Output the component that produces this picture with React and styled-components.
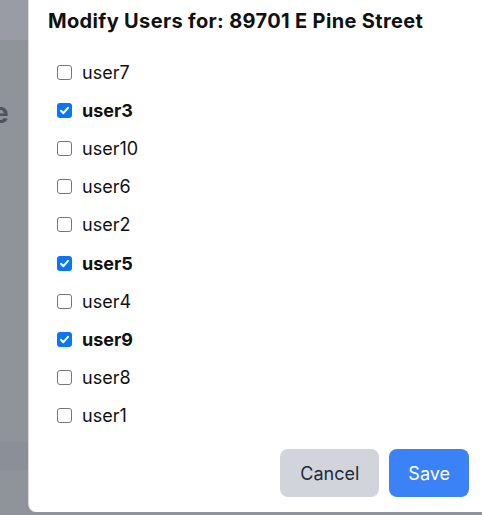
import React from 'react'
import styled, { createGlobalStyle } from 'styled-components'

const GlobalStyle = createGlobalStyle`
    html, body {
        margin: 0;
        padding: 0;
        overflow: hidden;
    }
    body {
        font-family: Inter, "Liberation Sans", sans-serif;
        background: #8f939a;
    }
`

const users = [
    { name: 'user7', checked: false },
    { name: 'user3', checked: true },
    { name: 'user10', checked: false },
    { name: 'user6', checked: false },
    { name: 'user2', checked: false },
    { name: 'user5', checked: true },
    { name: 'user4', checked: false },
    { name: 'user9', checked: true },
    { name: 'user8', checked: false },
    { name: 'user1', checked: false },
]

const Page = styled.div`
    display: flex;
    height: 515px;
    background: #8f939a;
`

const Backdrop = styled.div`
    width: 28px;
    flex-shrink: 0;
    display: flex;
    flex-direction: column;
    overflow: hidden;
`

const TopBar = styled.div`
    height: 40px;
    background: #999ca4;
`

const BackContent = styled.div`
    flex: 1;
`

const BackHeading = styled.h1`
    margin: 56px 0 0 -8px;
    font-size: 28px;
    line-height: 34px;
    font-weight: 700;
    color: #50545d;
    white-space: nowrap;
`

const BottomBand = styled.div`
    height: 28px;
    margin-bottom: 45px;
    background: #8b8f97;
`

const Modal = styled.div`
    flex: 1;
    height: 512px;
    box-sizing: border-box;
    background: #fff;
    border-left: 1px solid #d6d8dc;
    border-bottom-left-radius: 8px;
    display: flex;
    flex-direction: column;
    padding: 7px 13px 15px 19px;
`

const Title = styled.h2`
    margin: 0;
    font-size: 20px;
    line-height: 28px;
    font-weight: 700;
    letter-spacing: 0.35px;
    color: #111;
`

const List = styled.ul`
    list-style: none;
    margin: 18px 0 0;
    padding: 0 0 0 9px;
`

const Row = styled.li`
    height: 38.2px;
    display: flex;
    align-items: center;
    gap: 10px;
    font-size: 18px;
    color: #111;
    font-weight: ${p => (p.$checked ? 700 : 400)};
`

const Box = styled.span`
    width: 15px;
    height: 15px;
    box-sizing: border-box;
    border-radius: 3px;
    display: flex;
    align-items: center;
    justify-content: center;
    background: ${p => (p.$checked ? '#0b76f5' : '#fff')};
    border: ${p => (p.$checked ? 'none' : '1px solid #767676')};
`

const Footer = styled.div`
    margin-top: auto;
    display: flex;
    justify-content: flex-end;
    gap: 10px;
`

const Button = styled.button`
    height: 48px;
    padding: 0 ${p => (p.$primary ? 19 : 20)}px;
    border: none;
    border-radius: 8px;
    font-family: inherit;
    font-size: 18px;
    background: ${p => (p.$primary ? '#3b82f6' : '#d1d5db')};
    color: ${p => (p.$primary ? '#fff' : '#1f2937')};
`

function Checkbox({ checked }) {
    return (
        <Box $checked={checked}>
            {checked && (
                <svg width="11" height="11" viewBox="0 0 11 11">
                    <path d="M2 5.8 L4.4 8.2 L9 2.8" fill="none" stroke="#fff" strokeWidth="2" strokeLinecap="round" strokeLinejoin="round" />
                </svg>
            )}
        </Box>
    )
}

export default function App() {
    return (
        <Page>
            <GlobalStyle />
            <Backdrop>
                <TopBar />
                <BackContent>
                    <BackHeading>e</BackHeading>
                </BackContent>
                <BottomBand />
            </Backdrop>
            <Modal>
                <Title>Modify Users for: 89701 E Pine Street</Title>
                <List>
                    {users.map(u => (
                        <Row key={u.name} $checked={u.checked}>
                            <Checkbox checked={u.checked} />
                            {u.name}
                        </Row>
                    ))}
                </List>
                <Footer>
                    <Button>Cancel</Button>
                    <Button $primary>Save</Button>
                </Footer>
            </Modal>
        </Page>
    )
}
